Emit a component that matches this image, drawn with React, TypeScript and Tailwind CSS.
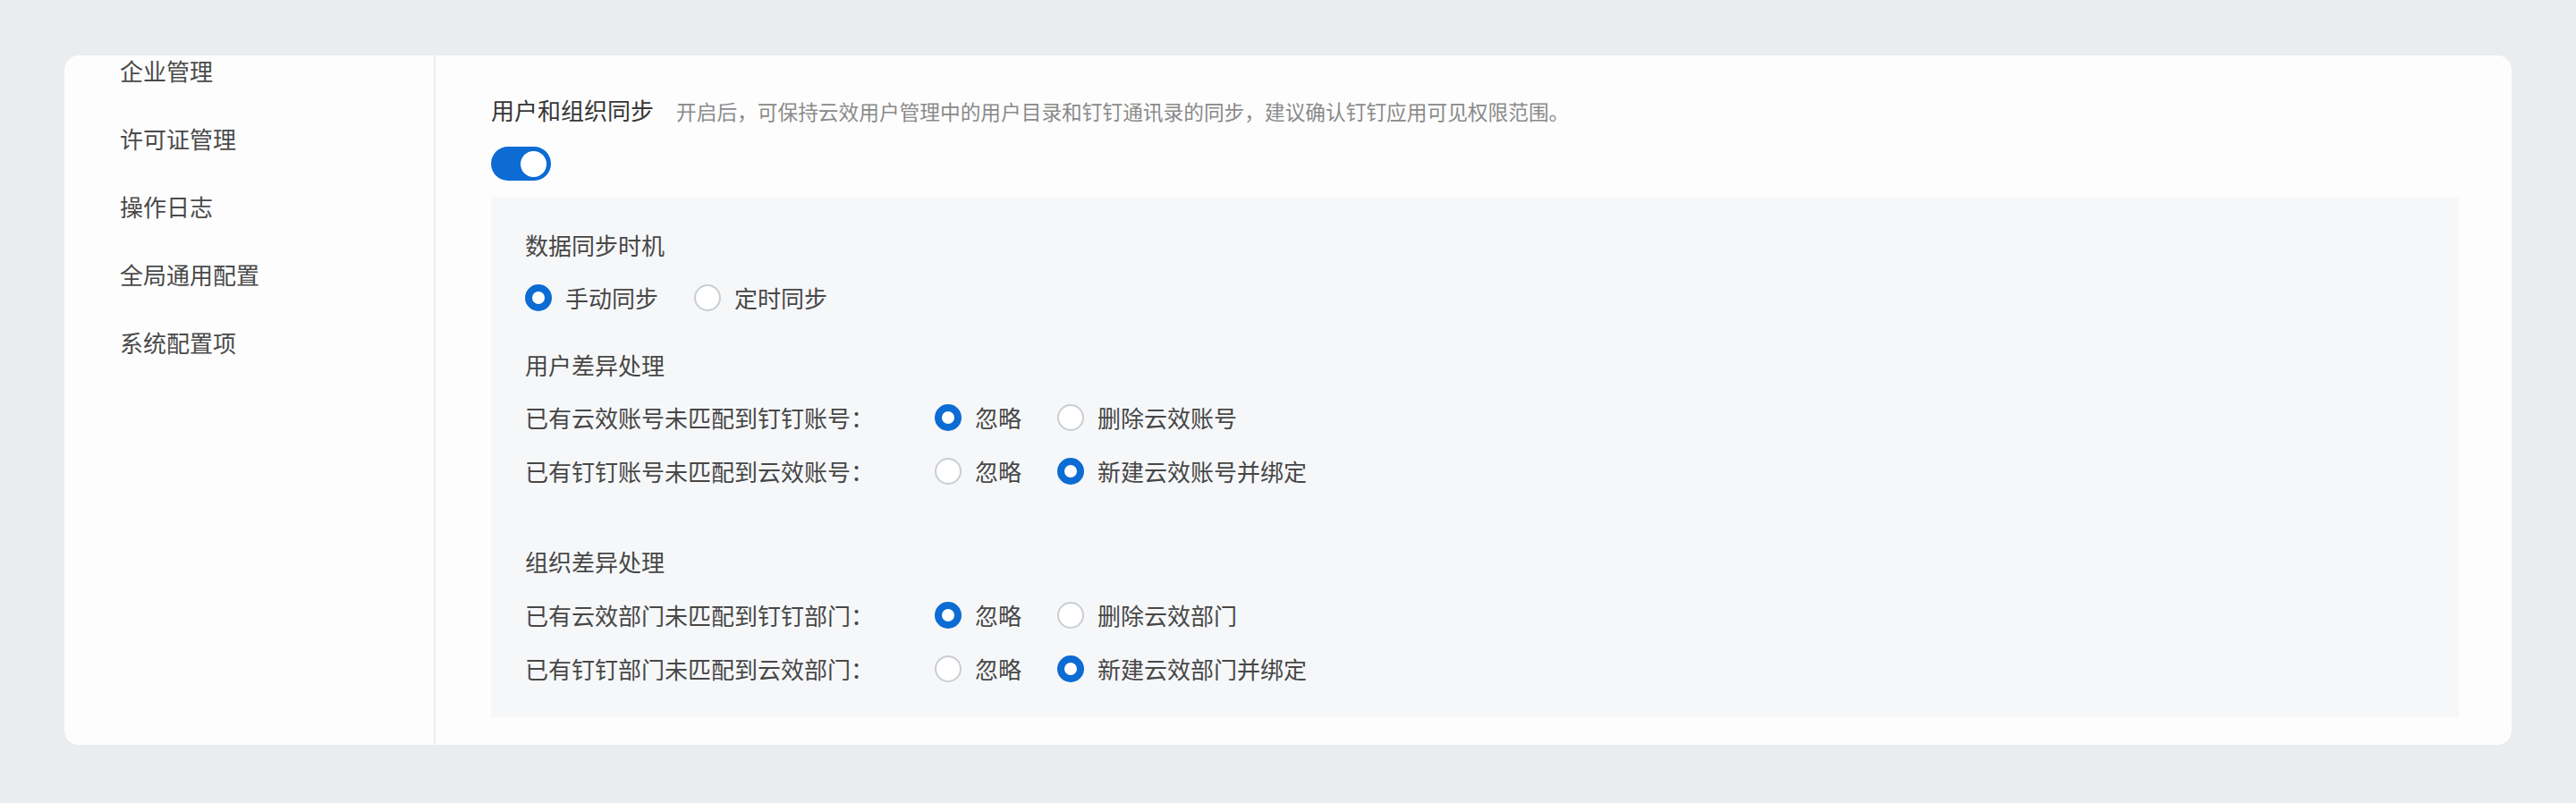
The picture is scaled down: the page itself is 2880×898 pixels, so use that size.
import { useState } from 'react';

const font = { fontFamily: '"Noto Sans CJK SC", "Noto Sans", sans-serif' };

const menu = ['企业管理', '许可证管理', '操作日志', '全局通用配置', '系统配置项'];

function Radio({ checked, label, onClick }: { checked: boolean; label: string; onClick: () => void }) {
  return (
    <button type="button" onClick={onClick} className="flex items-center gap-[15px] mr-[40px]">
      {checked ? (
        <span className="w-[30px] h-[30px] rounded-full border-[8px] border-[#0d6bd4] bg-white" />
      ) : (
        <span className="w-[30px] h-[30px] rounded-full border-2 border-[#c9cdd4] bg-white" />
      )}
      <span className="text-[26px] leading-[26px] text-[#474747]">{label}</span>
    </button>
  );
}

function OptionRow({
  label,
  options,
  value,
  onChange,
}: {
  label?: string;
  options: string[];
  value: number;
  onChange: (i: number) => void;
}) {
  return (
    <div className="h-[60px] flex items-center">
      {label && <div className="w-[458px] text-[26px] leading-[26px] text-[#474747]">{label}</div>}
      {options.map((o, i) => (
        <Radio key={o} label={o} checked={value === i} onClick={() => onChange(i)} />
      ))}
    </div>
  );
}

export default function App() {
  const [enabled, setEnabled] = useState(true);
  const [timing, setTiming] = useState(0);
  const [u1, setU1] = useState(0);
  const [u2, setU2] = useState(1);
  const [o1, setO1] = useState(0);
  const [o2, setO2] = useState(1);

  return (
    <div style={font} className="min-h-[898px] bg-[#e9edf0] pt-[62px] pl-[72px] pr-[72px] pb-[65px]">
      <div className="h-[771px] bg-[#fdfdfd] rounded-[16px] overflow-hidden flex">
        {/* sidebar */}
        <aside className="w-[415px] shrink-0 border-r-2 border-[#eceef1] pl-[62px] pt-[4px]">
          <ul className="flex flex-col gap-[50px]">
            {menu.map((m) => (
              <li key={m} className="text-[26px] leading-[26px] text-[#4a4a4a]">
                {m}
              </li>
            ))}
          </ul>
        </aside>

        {/* content */}
        <main className="flex-1 pl-[62px] pr-[59px] pt-[48px]">
          <div className="flex items-baseline gap-[25px]">
            <span className="text-[26px] leading-[26px] text-[#363636]">用户和组织同步</span>
            <span className="text-[22.7px] leading-[22px] text-[#8a8a8a]">
              开启后，可保持云效用户管理中的用户目录和钉钉通讯录的同步，建议确认钉钉应用可见权限范围。
            </span>
          </div>

          <button
            type="button"
            onClick={() => setEnabled(!enabled)}
            className={`mt-[28px] w-[67px] h-[38px] rounded-full p-[5px] flex items-center ${
              enabled ? 'bg-[#0d6bd4] justify-end' : 'bg-[#c9cdd4] justify-start'
            }`}
          >
            <span className="w-[29px] h-[29px] rounded-full bg-white" />
          </button>

          <section className="mt-[18px] bg-[#f6f7f9] pl-[38px] pt-[25px] pb-[24px]">
            <div className="h-[58px] flex items-center text-[26px] leading-[26px] text-[#474747]">数据同步时机</div>
            <OptionRow options={['手动同步', '定时同步']} value={timing} onChange={setTiming} />

            <div className="mt-[15px] h-[59px] flex items-center text-[26px] leading-[26px] text-[#474747]">用户差异处理</div>
            <OptionRow label="已有云效账号未匹配到钉钉账号：" options={['忽略', '删除云效账号']} value={u1} onChange={setU1} />
            <OptionRow label="已有钉钉账号未匹配到云效账号：" options={['忽略', '新建云效账号并绑定']} value={u2} onChange={setU2} />

            <div className="mt-[41px] h-[60px] flex items-center text-[26px] leading-[26px] text-[#474747]">组织差异处理</div>
            <OptionRow label="已有云效部门未匹配到钉钉部门：" options={['忽略', '删除云效部门']} value={o1} onChange={setO1} />
            <OptionRow label="已有钉钉部门未匹配到云效部门：" options={['忽略', '新建云效部门并绑定']} value={o2} onChange={setO2} />
          </section>
        </main>
      </div>
    </div>
  );
}
